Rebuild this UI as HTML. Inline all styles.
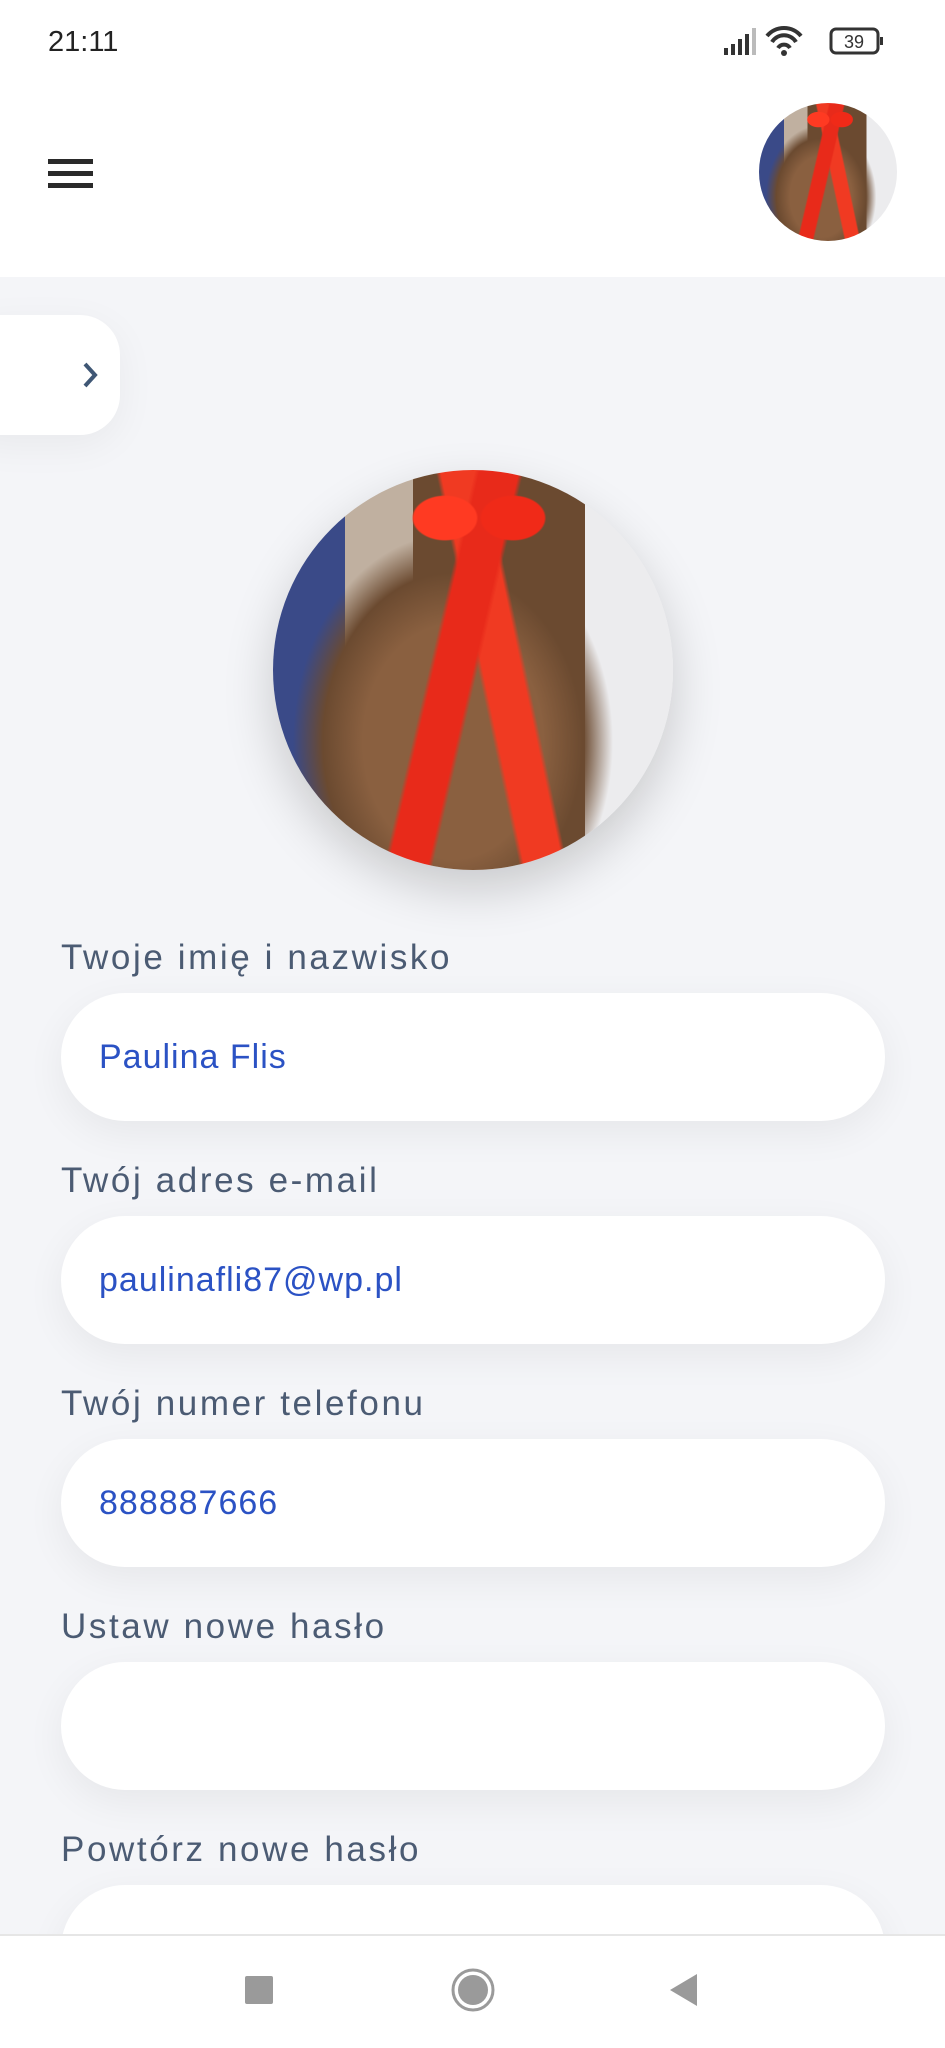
<!DOCTYPE html>
<html><head><meta charset="utf-8"><style>
*{margin:0;padding:0;box-sizing:border-box}
body{width:945px;height:2048px;overflow:hidden;background:#f4f5f8;font-family:"Liberation Sans",sans-serif;position:relative}
.hdr{position:absolute;left:0;top:0;width:945px;height:277px;background:#fff}
.time{position:absolute;left:48px;top:26px;font-size:29px;color:#222}
.ham{position:absolute;left:48px;width:45px;height:5px;background:#2a2a2a}
.av{position:absolute;border-radius:50%;overflow:hidden;background:
radial-gradient(ellipse 13% 9% at 43% 12%,#ff3a22 0 60%,transparent 64%),
radial-gradient(ellipse 13% 9% at 60% 12%,#f02a18 0 60%,transparent 64%),
linear-gradient(103deg,transparent 41%,#e82a1a 42% 50%,transparent 51%),
linear-gradient(78deg,transparent 51%,#f03a22 52% 60%,transparent 61%),
radial-gradient(ellipse 50% 65% at 45% 68%,#8a6040 0 45%,#6b4a30 65%,transparent 80%),
linear-gradient(90deg,#3a4a88 0 18%,#c0b0a0 18% 35%,#6b4a30 35% 78%,#ececee 78%)}
.tab{position:absolute;left:-40px;top:315px;width:160px;height:120px;background:#fff;border-radius:40px;box-shadow:0 10px 40px rgba(0,0,0,.05)}
.lbl{position:absolute;left:61px;font-size:35px;color:#4b5b73;letter-spacing:2.6px}
.inp{position:absolute;left:61px;width:824px;height:128px;background:#fff;border-radius:64px;box-shadow:0 12px 40px rgba(0,0,0,.06);padding-left:38px;line-height:128px;font-size:34px;color:#2b52c4;letter-spacing:1px}
.nav{position:absolute;left:0;top:1934px;width:945px;height:114px;background:#fff;border-top:2px solid #e6e6e6}
</style></head><body>
<div class="hdr"></div>
<div class="time">21:11</div>
<svg style="position:absolute;left:722px;top:24px" width="170" height="36" viewBox="0 0 170 36">
<rect x="2" y="24" width="4" height="7" fill="#333"/><rect x="9" y="20" width="4" height="11" fill="#333"/><rect x="16" y="15" width="4" height="16" fill="#333"/><rect x="23" y="10" width="4" height="21" fill="#333"/><rect x="30" y="4" width="4" height="27" fill="#bbb"/>
<path d="M45 12 A22 22 0 0 1 79 12" stroke="#333" stroke-width="4" fill="none"/><path d="M50 18 A14 14 0 0 1 74 18" stroke="#333" stroke-width="4" fill="none"/><path d="M56 24 A7 7 0 0 1 68 24" stroke="#333" stroke-width="4" fill="none"/><circle cx="62" cy="29" r="3" fill="#333"/>
<rect x="109" y="5" width="47" height="24" rx="5" fill="none" stroke="#333" stroke-width="3"/><rect x="158" y="13" width="3" height="8" fill="#333"/>
<text x="132" y="24" font-size="18" text-anchor="middle" fill="#333" font-family="Liberation Sans">39</text></svg>
<div class="ham" style="top:159px"></div><div class="ham" style="top:171px"></div><div class="ham" style="top:183px"></div>
<div class="av" style="left:759px;top:103px;width:138px;height:138px"></div>
<div class="tab"></div>
<svg style="position:absolute;left:80px;top:360px" width="22" height="30"><path d="M5 4 L15 15 L5 26" stroke="#3f5775" stroke-width="4" fill="none"/></svg>
<div class="av" style="left:273px;top:470px;width:400px;height:400px;box-shadow:0 20px 50px rgba(0,0,0,.18)"></div>
<div class="lbl" style="top:938px">Twoje imię i nazwisko</div>
<div class="inp" style="top:993px">Paulina Flis</div>
<div class="lbl" style="top:1161px">Twój adres e-mail</div>
<div class="inp" style="top:1216px">paulinafli87@wp.pl</div>
<div class="lbl" style="top:1384px">Twój numer telefonu</div>
<div class="inp" style="top:1439px">888887666</div>
<div class="lbl" style="top:1607px">Ustaw nowe hasło</div>
<div class="inp" style="top:1662px"></div>
<div class="lbl" style="top:1830px">Powtórz nowe hasło</div>
<div class="inp" style="top:1885px"></div>
<div class="nav"></div>
<svg style="position:absolute;left:0;top:1934px" width="945" height="114">
<rect x="245" y="42" width="28" height="28" rx="2" fill="#9a9a9a"/>
<circle cx="473" cy="56" r="20" fill="none" stroke="#9a9a9a" stroke-width="3"/><circle cx="473" cy="56" r="15" fill="#9a9a9a"/>
<path d="M697 40 L697 72 L670 56 Z" fill="#9a9a9a"/></svg>
</body></html>
